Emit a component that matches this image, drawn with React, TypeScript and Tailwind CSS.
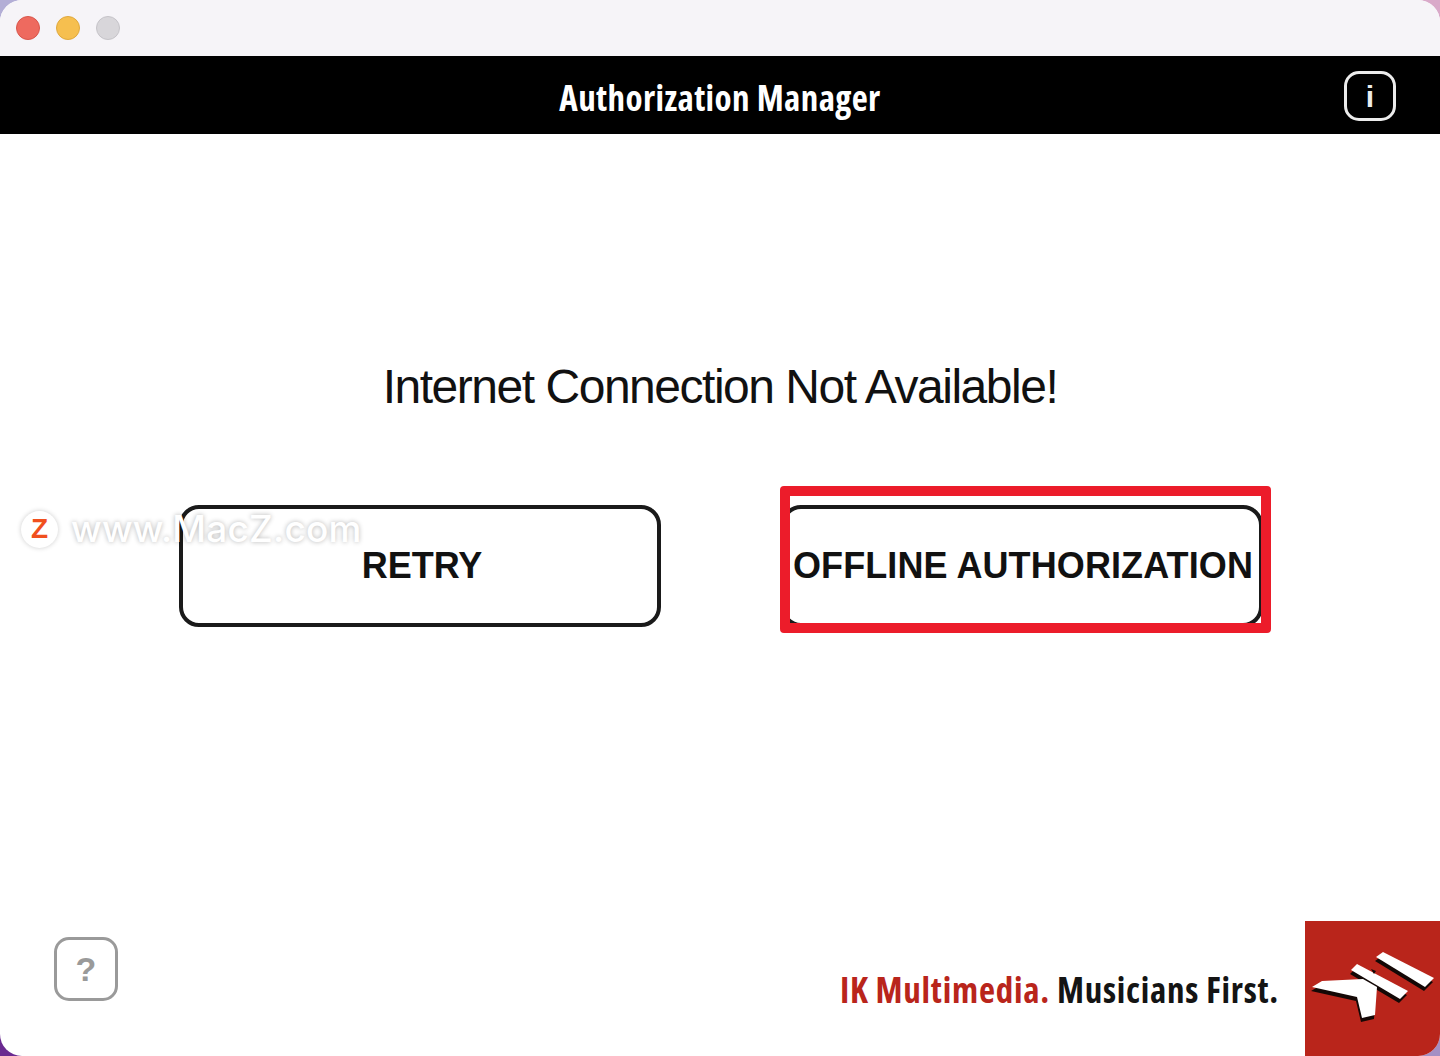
const TrafficLight = ({ className }: { className: string }) => (
  <span className={`block w-[24px] h-[24px] rounded-full border ${className}`} />
);

const IkLogo = () => {
  const bars = (
    <>
      <polygon points="71,36 78,31 129,57 120,66" />
      <polygon points="46,49 52,43 103,70 95,78" />
      <polygon points="7,66 17,60 58,58 72,66 70,94 57,97 52,76" />
    </>
  );

  return (
    <div className="w-[135px] h-[135px] bg-[#b9251b]">
      <svg viewBox="0 0 135 135" className="w-full h-full">
        <g fill="#140806" transform="translate(-1 4)">
          {bars}
        </g>
        <g fill="#ffffff">{bars}</g>
        <polygon points="66,48 71,50 69,53" fill="#140806" />
      </svg>
    </div>
  );
};

const App = () => {
  return (
    <div className="relative w-[1440px] h-[1056px] overflow-hidden bg-white font-['Liberation_Sans',sans-serif]">
      <span className="absolute top-0 left-0 w-[24px] h-[24px] bg-[#b3aed6]" />
      <span className="absolute top-0 right-0 w-[24px] h-[24px] bg-[#d9a9c9]" />
      <span className="absolute bottom-0 left-0 w-[24px] h-[24px] bg-[#6a2a90]" />
      <span className="absolute bottom-0 right-0 w-[24px] h-[24px] bg-[#a48fc4]" />

      <div className="relative flex flex-col h-full rounded-[22px] overflow-hidden bg-white">
        <div className="h-[56px] flex items-center gap-[16px] pl-[16px] pb-[1px] bg-[#f6f4f8]">
          <TrafficLight className="bg-[#ee6a5f] border-[#d8564c]" />
          <TrafficLight className="bg-[#f6bf4f] border-[#dfa83e]" />
          <TrafficLight className="bg-[#d8d6da] border-[#c5c3c8]" />
        </div>

        <div className="relative h-[78px] flex items-center justify-center bg-black">
          <h1 className="pt-[6px] font-['Open_Sans',sans-serif] font-bold font-stretch-semi-condensed text-[35px] tracking-[0.4px] text-white">
            Authorization Manager
          </h1>
          <button className="absolute right-[44px] top-[15px] w-[52px] h-[50px] flex items-center justify-center rounded-[15px] border-[3px] border-[#ececec] text-[30px] font-bold text-[#ececec]">
            i
          </button>
        </div>

        <main className="flex-1 flex flex-col">
          <p className="pt-[223px] text-center text-[48px] leading-[60px] tracking-[-1.48px] text-[#111111]">
            Internet Connection Not Available!
          </p>

          <div className="flex gap-[120px] pt-[88px] pl-[179px]">
            <button className="w-[482px] h-[122px] pl-[4px] rounded-[20px] border-[4px] border-[#1a1a1a] text-[36px] font-bold text-[#111111]">
              RETRY
            </button>
            <div className="relative">
              <button className="w-[482px] h-[122px] pl-[2px] rounded-[20px] border-[4px] border-[#1a1a1a] text-[36px] font-bold tracking-[0.1px] whitespace-nowrap text-[#111111]">
                OFFLINE AUTHORIZATION
              </button>
              <div className="absolute top-[-19px] left-[-1px] right-[-8px] bottom-[-6px] rounded-[4px] border-[10px] border-[#ec1c2a]" />
            </div>
          </div>

          <footer className="mt-auto flex items-end">
            <button className="mb-[55px] ml-[54px] w-[64px] h-[64px] flex items-center justify-center rounded-[15px] border-[3px] border-[#9a9a9a] text-[34px] font-bold text-[#9a9a9a]">
              ?
            </button>
            <div className="ml-auto mb-[44px] mr-[26px] font-['Open_Sans',sans-serif] font-bold font-stretch-semi-condensed text-[35px] leading-[44px] tracking-[0.75px] whitespace-nowrap">
              <span className="text-[#b9251b]">IK Multimedia.</span>{" "}
              <span className="text-[#141414]">Musicians First.</span>
            </div>
            <IkLogo />
          </footer>
        </main>
      </div>

      <div className="absolute left-[21px] top-[510px] flex items-center gap-[13px]">
        <span className="w-[37px] h-[37px] flex items-center justify-center rounded-full bg-white shadow-[0_0_5px_rgba(0,0,0,0.2)] text-[28px] font-bold text-[#f0501e]">
          Z
        </span>
        <span className="font-['Inter',sans-serif] font-medium text-[37px] leading-[38px] tracking-[0.2px] text-white [text-shadow:0_0_5px_rgba(0,0,0,0.3)]">
          www.MacZ.com
        </span>
      </div>
    </div>
  );
};

export default App;
